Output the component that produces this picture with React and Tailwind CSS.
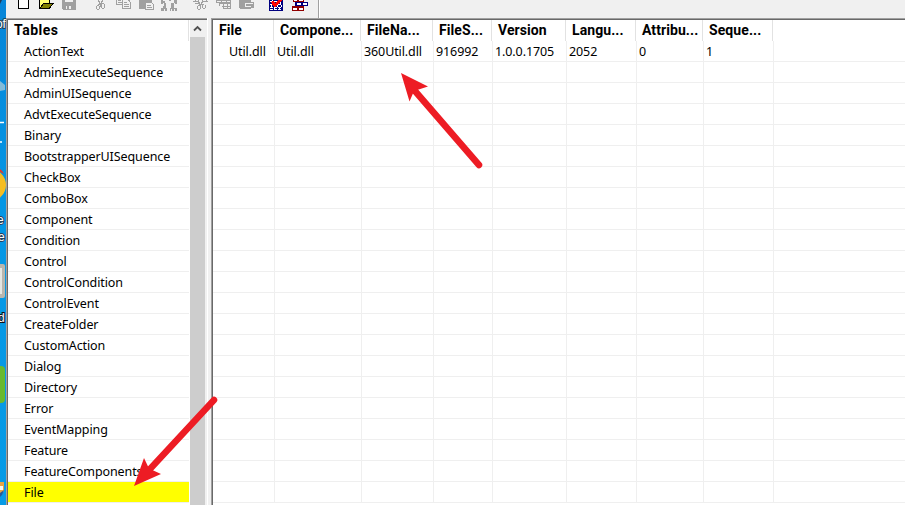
const tables = [
  'ActionText', 'AdminExecuteSequence', 'AdminUISequence', 'AdvtExecuteSequence',
  'Binary', 'BootstrapperUISequence', 'CheckBox', 'ComboBox', 'Component',
  'Condition', 'Control', 'ControlCondition', 'ControlEvent', 'CreateFolder',
  'CustomAction', 'Dialog', 'Directory', 'Error', 'EventMapping', 'Feature',
  'FeatureComponents', 'File',
];

const columns = [
  { title: 'File', value: 'Util.dll', head: 'w-[61px] pl-[6px]', cell: 'w-[62px] pl-[16px]' },
  { title: 'Compone...', value: 'Util.dll', head: 'w-[87px] pl-[6px]', cell: 'w-[87px] pl-[2px]' },
  { title: 'FileNa...', value: '360Util.dll', head: 'w-[72px] pl-[6px]', cell: 'w-[72px] pl-[2px]' },
  { title: 'FileS...', value: '916992', head: 'w-[59px] pl-[6px]', cell: 'w-[59px] pl-[2px]' },
  { title: 'Version', value: '1.0.0.1705', head: 'w-[74px] pl-[6px]', cell: 'w-[74px] pl-[2px]' },
  { title: 'Langu...', value: '2052', head: 'w-[70px] pl-[6px]', cell: 'w-[70px] pl-[2px]' },
  { title: 'Attribu...', value: '0', head: 'w-[67px] pl-[6px]', cell: 'w-[67px] pl-[2px]' },
  { title: 'Seque...', value: '1', head: 'w-[70px] pl-[6px]', cell: 'w-[70px] pl-[2px]' },
];

const headFont = "font-['Roboto',sans-serif] text-[14px] font-bold";

// Strip of the desktop that stays visible beside the window
function Desktop() {
  return (
    <svg width="6" height="505" className="shrink-0" fontFamily="Liberation Sans, sans-serif">
      <defs>
        <linearGradient id="sky" x1="0" y1="0" x2="0" y2="1">
          <stop offset="0" stopColor="#0785d8" />
          <stop offset="0.4" stopColor="#0496e4" />
          <stop offset="1" stopColor="#079be6" />
        </linearGradient>
      </defs>
      <rect width="6" height="505" fill="url(#sky)" />
      <path d="M0 0h2l-2 4z" fill="#233b57" />
      <g fill="#fff" stroke="#24435c" strokeWidth="2" paintOrder="stroke" fontSize="12">
        <text x="-4" y="28">of</text>
        <text x="-3" y="224">e</text>
        <text x="-2" y="241">e</text>
        <text x="-2" y="322" stroke="#111">d</text>
      </g>
      <path d="M0 81l5 4v5l-5 1z" fill="#81bbd9" />
      <path d="M0 122.500h4M0 142h2" stroke="#fff" strokeWidth="1.500" />
      <circle cx="-10" cy="185" r="16" fill="#f5bd22" />
      <path d="M0 169q3 2 4 5l-4-2z" fill="#df3a2d" />
      <rect x="-5" y="264" width="10" height="34" rx="2" fill="#b8b6ae" />
      <path d="M0 268h2v26h-2z" fill="#e4e6e3" />
      <rect x="-8" y="366" width="13" height="37" rx="4" fill="#68b92e" />
      <path d="M0 482h4v9l-4 5z" fill="#e9a443" />
      <path d="M0 486h3v4h-3z" fill="#f7f7ef" />
      <path d="M0 493l4-3-2 5-2 2z" fill="#275a9a" />
    </svg>
  );
}

function Toolbar() {
  return (
    <div className="h-[18px] w-full shrink-0 bg-[#f0f0f0]">
      <svg width="899" height="18" viewBox="6 0 899 18" shapeRendering="crispEdges" fill="none">
        <path d="M18.500 -3V8.500H28.500V-3" fill="#fff" stroke="#000" />
        <g>
          <path d="M40 0h10v3h-7l-3 5z" fill="#ffff73" />
          <path d="M40 8l4-5h10l-5 5z" fill="#808000" />
          <path d="M39.500 0v8.500h9.500l5-5.500h-10l-4 5M49.500 0v3" stroke="#000" />
        </g>
        <g fill="#a0a0a0">
          <path d="M62 0h14v10h-13l-1-1z" />
          <path d="M65 0h8v2h-8zM66 6h5v3h-5z" fill="#f0f0f0" />
          <path d="M67 6h2v3h-2z" />
        </g>
        <g stroke="#a0a0a0">
          <path d="M98.500 0v1.500h1v2h1M102.500 0v1.500h-1v2h-1v3M98 4.500h2.500M96.500 6v3M97 9.500h2M99.500 6v3M97 5.500h2M102 3.500h2M101.500 4v4M104.500 4v4M102 8.500h2" />
          <path d="M116.500 -3v7.500h6M118 .5h3M118 2.500h4" />
          <path d="M122.500 -1v9.500h8v-6l-2-2.500zM124 2.500h3M124 4.500h5M124 6.500h5" />
        </g>
        <path d="M139 0h13v3h-6v6h-7z" fill="#a0a0a0" />
        <path d="M145.500 2.500h6l2 2v5h-8zM147 5.500h4M147 7.500h5" fill="#f0f0f0" stroke="#a0a0a0" />
        <g fill="#a0a0a0">
          <path d="M161 0h2v1h2v2h-2v1h-2zM164 3h2v3h-2zM174 0h3v4h-2v-1h-1zM169 0h2v1h-2zM171 3h3v3h-3zM161 8h2v-2h3v2h1v3h-2v-2h-1v2h-3zM170 8h1v-2h3v2h3v3h-2v-2h-1v2h-2v-2h-1v2h-1z" />
        </g>
        <g stroke="#a0a0a0">
          <path d="M193 1.500h5M203 1.500h5M195 3.500h4M195.500 0v1M206.500 0v1M198.500 0v2h1v2h1M202.500 0v2h-1v2h-1v2M198 5.500h2M197.500 6v3M198 9.500h2M200.500 6v3M202 4.500h2M202.500 5v3M205.500 5v3M203 8.500h2" />
          <path d="M216.500 -1v3.500h14v-3.500M217 .5h14M221.500 0v2M226.500 0v2M218.500 3.500h12v3h-9M219.500 3v3M223.500 3v5h7v-4M224 6.500h6M227.500 4v4" />
        </g>
        <path d="M239 0h12v2h3v6h-3v1h-11l-1-1z" fill="#a0a0a0" />
        <path d="M245 3.500h8M245 6.500h6M245.500 4v2" stroke="#f0f0f0" />
        <g>
          <path d="M269 0h14v11h-14z" fill="#000080" />
          <path d="M270 1.500h12M270 4.500h12M270 7.500h12M270 9.500h12" stroke="#fff" strokeDasharray="3 1" />
          <path d="M272.500 0v1M279.500 0v1M274.500 2v2M280.500 2v2M271.500 5v2M277.500 5v2M281.500 5v2M274.500 8v1M279.500 8v1" stroke="#fff" />
          <path d="M271 2l2-1 2 2 4-3h3l-6 7h-2z" fill="#f00" />
        </g>
        <g>
          <path d="M293 0h11v2h-11zM292 6h12v5h-12z" fill="#900000" />
          <path d="M294 0h3v1h-3zM299 0h4v1h-4zM293 8h4v2h-4zM299 8h4v2h-4z" fill="#fff" />
          <path d="M295 2h13v4h-13z" fill="#000080" />
          <path d="M297 3h4v2h-4zM303 3h4v2h-4z" fill="#fff" />
        </g>
        <path d="M318.500 0v18" stroke="#a0a0a0" />
        <path d="M319.500 0v18" stroke="#fff" />
      </svg>
    </div>
  );
}

function TablesPane() {
  return (
    <div className="flex w-[199px] shrink-0 border-r border-[#f0f0f0] bg-white">
      <div className="w-[181px] shrink-0">
        <div className={`h-[21px] border-r border-[#e2e2e2] pl-[6px] leading-[21px] tracking-[0.5px] ${headFont}`}>Tables</div>
        {tables.map((name) => (
          <div
            key={name}
            className={`h-[21px] w-[181px] border-b border-[#efefef] pl-[16px] leading-[21px] whitespace-nowrap ${
              name === 'File' ? 'bg-[#ffff00]' : ''
            }`}
          >
            {name}
          </div>
        ))}
      </div>
      <div className="ml-px flex w-[15px] shrink-0 flex-col bg-[#cdcdcd]">
        <div className="flex h-[17px] items-center justify-center bg-[#f0f0f0]">
          <svg width="9" height="7" fill="none" stroke="#505050" strokeWidth="1.800">
            <path d="M1 5.500L4.500 2L8 5.500" />
          </svg>
        </div>
      </div>
      <div className="w-[2px] bg-[#f0f0f0]" />
    </div>
  );
}

function DataGrid() {
  return (
    <div className="min-w-0 flex-1 bg-white">
      <div className="flex h-[21px]">
        {columns.map((c) => (
          <div key={c.title} className={`h-[21px] shrink-0 border-r border-[#e2e2e2] leading-[21px] tracking-[0.08px] whitespace-nowrap ${headFont} ${c.head}`}>
            {c.title}
          </div>
        ))}
      </div>
      {tables.map((name, row) => (
        <div key={name} className="flex h-[21px] border-b border-[#efefef]">
          {columns.map((c) => (
            <div key={c.title} className={`h-[21px] shrink-0 border-r border-[#efefef] leading-[21px] whitespace-nowrap ${c.cell}`}>
              {row === 0 ? c.value : ''}
            </div>
          ))}
        </div>
      ))}
    </div>
  );
}

function Arrows() {
  return (
    <svg className="pointer-events-none absolute inset-0" width="905" height="505" fill="#ed1c24" stroke="#ed1c24">
      <path d="M479 165L415 91M214 400L150 469" strokeWidth="6.500" strokeLinecap="round" />
      <path d="M401 73L428 86.500L414 91L409.500 101.500Z" stroke="none" />
      <path d="M134 486L144 458L149 468.500L161 474Z" stroke="none" />
    </svg>
  );
}

export default function App() {
  return (
    <div className="relative flex h-[505px] w-[905px] overflow-hidden bg-[#f0f0f0] font-['Noto_Sans',sans-serif] text-[12.5px] tracking-[-0.1px] text-black">
      <Desktop />
      <div className="flex h-[505px] min-w-0 flex-1 flex-col">
        <Toolbar />
        <div className="flex min-h-0 flex-1">
          <div className="flex shrink-0 border-t border-l border-[#a0a0a0]">
            <div className="flex border-t border-l border-[#696969]">
              <TablesPane />
            </div>
          </div>
          <div className="w-[4px] shrink-0 border-l border-white bg-[#f0f0f0]" />
          <div className="flex min-w-0 flex-1 border-t border-l border-[#a0a0a0]">
            <div className="flex min-w-0 flex-1 border-t border-l border-[#696969]">
              <DataGrid />
            </div>
          </div>
        </div>
      </div>
      <Arrows />
    </div>
  );
}
